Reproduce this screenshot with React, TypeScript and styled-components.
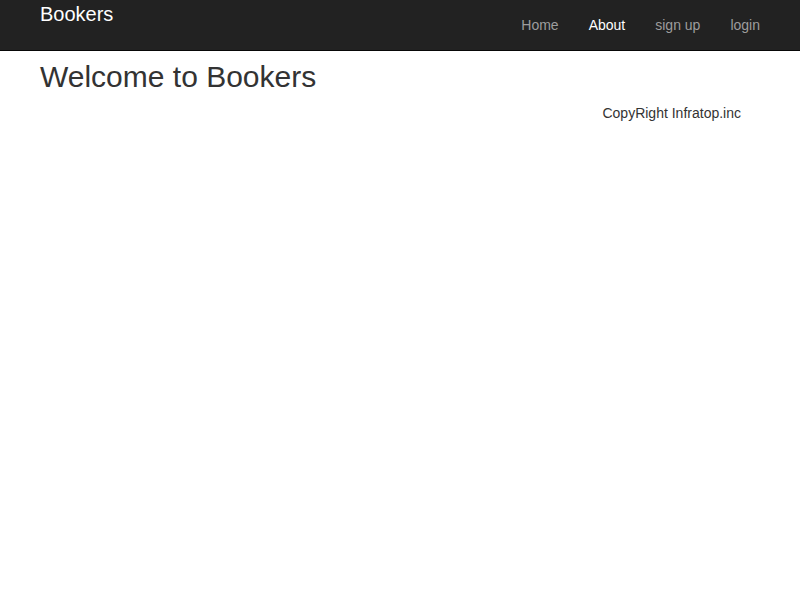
import React from "react";
import styled, { createGlobalStyle } from "styled-components";

const Global = createGlobalStyle`
  html, body { margin: 0; padding: 0; background: #fff; }
  body {
    font-family: "Liberation Sans", Arial, Helvetica, sans-serif;
    font-size: 14px;
    line-height: 1.42857;
    color: #333;
  }
`;

const Navbar = styled.nav`
  background: #222;
  border-bottom: 1px solid #080808;
  height: 50px;
`;

const Container = styled.div`
  width: 720px;
  margin: 0 auto;
  padding: 0 40px;
`;

const NavInner = styled(Container)`
  display: flex;
  justify-content: space-between;
  align-items: flex-start;
  height: 50px;
`;

const Brand = styled.a`
  color: #fff;
  font-size: 20px;
  line-height: 20px;
  padding-top: 4px;
  text-decoration: none;
`;

const NavList = styled.ul`
  list-style: none;
  display: flex;
  margin: 0 -15px 0 0;
  padding: 0;
`;

const NavLink = styled.a<{ $active?: boolean }>`
  display: block;
  padding: 15px;
  line-height: 20px;
  font-size: 14px;
  color: ${(p) => (p.$active ? "#fff" : "#9d9d9d")};
  text-decoration: none;
`;

const Heading = styled.h2`
  font-size: 30px;
  font-weight: 500;
  line-height: 1.1;
  margin: 9px 0 10px;
  color: #333;
`;

const Footer = styled.p`
  margin: 0;
  text-align: right;
  padding-right: 19px;
  line-height: 20px;
  color: #333;
`;

export default function App() {
  return (
    <>
      <Global />
      <Navbar>
        <NavInner>
          <Brand href="#">Bookers</Brand>
          <NavList>
            <li><NavLink href="#">Home</NavLink></li>
            <li><NavLink href="#" $active>About</NavLink></li>
            <li><NavLink href="#">sign up</NavLink></li>
            <li><NavLink href="#">login</NavLink></li>
          </NavList>
        </NavInner>
      </Navbar>
      <Container>
        <Heading>Welcome to Bookers</Heading>
        <Footer>CopyRight Infratop.inc</Footer>
      </Container>
    </>
  );
}
